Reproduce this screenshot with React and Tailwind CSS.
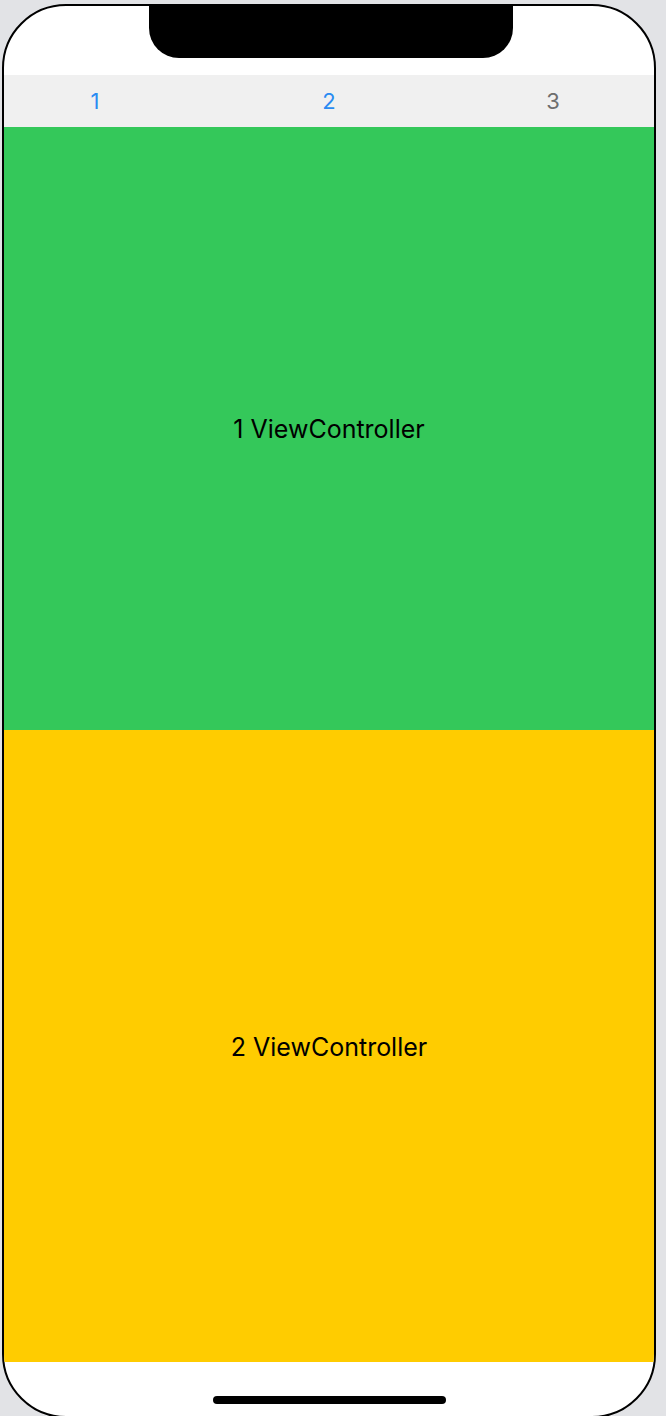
export default function App() {
  return (
    <div className="w-[666px] h-[1416px] bg-[#e2e3e6] overflow-hidden pl-[2px] pt-[4px]" style={{ fontFamily: 'Inter, "Liberation Sans", sans-serif' }}>
      <div className="relative w-[654px] h-[1414px] bg-white border-2 border-black rounded-[64px] overflow-hidden flex flex-col">
        {/* Notch */}
        <div className="absolute top-0 left-[145px] w-[364px] h-[52px] bg-black rounded-b-[30px]" />

        <div className="h-[69px] shrink-0" />

        {/* Tabs */}
        <div className="h-[52px] shrink-0 bg-[#f0f0f0] flex items-center text-[22px]">
          <div className="w-[182px] text-center text-[#2a8bf2]">1</div>
          <div className="w-[286px] text-center text-[#2a8bf2]">2</div>
          <div className="w-[162px] text-center text-[#6e6e6e]">3</div>
        </div>

        <div className="h-[603px] shrink-0 bg-[#34c85a] flex items-center justify-center pt-[2px] text-[25px] text-black">
          1 ViewController
        </div>
        <div className="h-[632px] shrink-0 bg-[#ffcc00] flex items-center justify-center pt-[4px] text-[25px] text-black">
          2 ViewController
        </div>

        <div className="flex-1 flex justify-center pt-[34px]">
          <div className="w-[233px] h-[8px] bg-black rounded-full" />
        </div>
      </div>
    </div>
  )
}
